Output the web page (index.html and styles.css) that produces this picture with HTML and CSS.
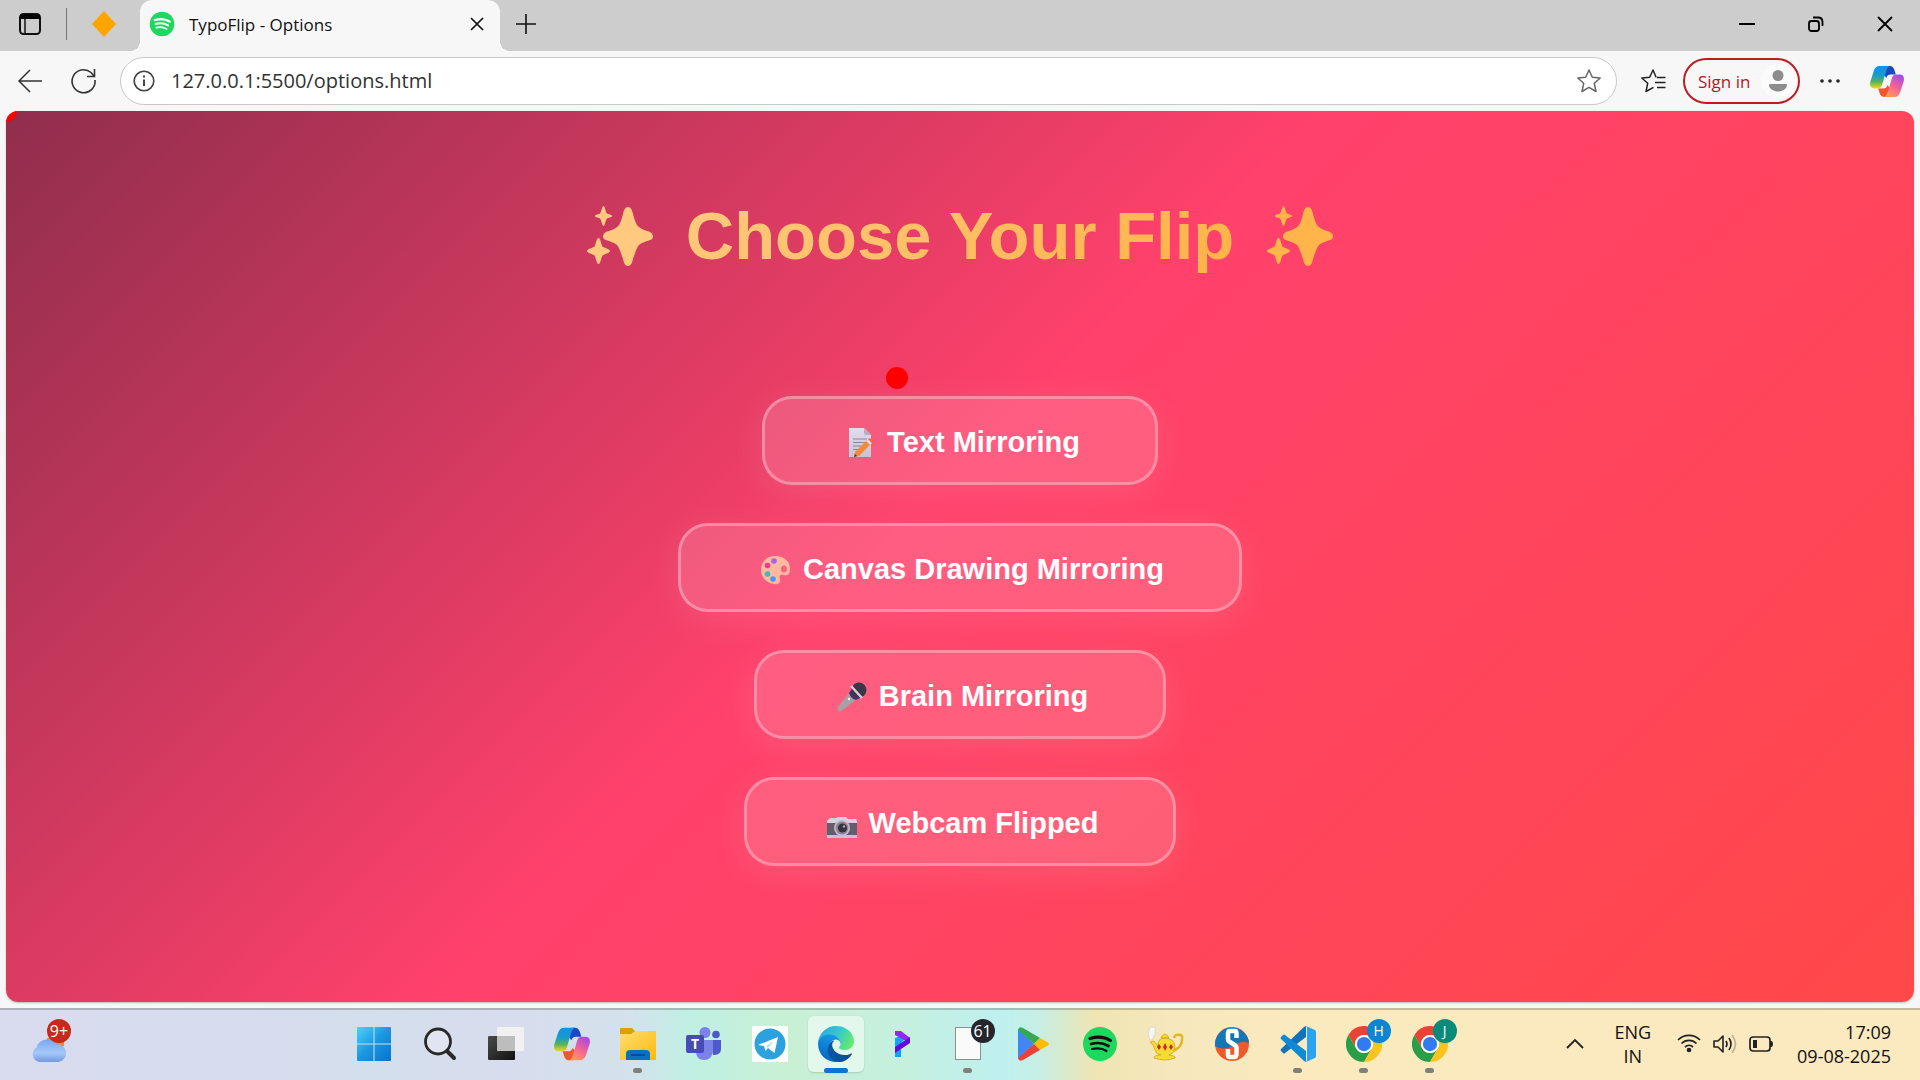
FILE: index.html
```html
<!DOCTYPE html>
<html lang="en">
<head>
<meta charset="utf-8">
<meta name="viewport" content="width=device-width, initial-scale=1">
<title>TypoFlip - Options</title>
<link rel="stylesheet" href="styles.css">
</head>
<body>
<svg class="defs" aria-hidden="true">
  <defs>
    <linearGradient id="cpA" x1="0" y1="0" x2="0" y2="1"><stop offset="0" stop-color="#178fe8"/><stop offset=".4" stop-color="#159ad0"/><stop offset=".7" stop-color="#57b35c"/><stop offset="1" stop-color="#f4d813"/></linearGradient>
    <linearGradient id="cpB" x1=".8" y1="0" x2=".3" y2="1"><stop offset="0" stop-color="#a04be8"/><stop offset=".5" stop-color="#f0609a"/><stop offset="1" stop-color="#ff9a5c"/></linearGradient>
    <linearGradient id="edA" x1="0" y1="0" x2="1" y2="0"><stop offset="0" stop-color="#0c59a4"/><stop offset="1" stop-color="#114a8b"/></linearGradient>
    <linearGradient id="edB" x1=".6" y1="0" x2=".3" y2="1"><stop offset="0" stop-color="#1b9de2"/><stop offset=".5" stop-color="#0d7fd8"/><stop offset="1" stop-color="#0667ba"/></linearGradient>
    <linearGradient id="edC" x1="0" y1=".2" x2="1" y2=".6"><stop offset="0" stop-color="#2da5e4"/><stop offset=".5" stop-color="#36c6cf"/><stop offset="1" stop-color="#66eb6e"/></linearGradient>
    <linearGradient id="winG" x1="0" y1="0" x2="1" y2="1"><stop offset="0" stop-color="#4dd2ff"/><stop offset=".5" stop-color="#1a96e0"/><stop offset="1" stop-color="#0673cf"/></linearGradient>
    <linearGradient id="foldG" x1="0" y1="0" x2="1" y2="1"><stop offset="0" stop-color="#ffdd72"/><stop offset="1" stop-color="#fdb90d"/></linearGradient>
    <linearGradient id="cloudG" x1="0" y1="0" x2="0" y2="1"><stop offset="0" stop-color="#7ba7ec"/><stop offset=".6" stop-color="#a5c8fa"/><stop offset="1" stop-color="#7399e0"/></linearGradient>
    <linearGradient id="darkG" x1="0" y1="0" x2="1" y2="1"><stop offset="0" stop-color="#4a4a48"/><stop offset="1" stop-color="#111"/></linearGradient>
    <linearGradient id="paperG" x1="0" y1="0" x2="0" y2="1"><stop offset="0" stop-color="#e3dced"/><stop offset="1" stop-color="#c9c2d6"/></linearGradient>
    <symbol id="copilot" viewBox="0 0 108 98">
      <path fill="#1b48c8" d="M52 0H63C71 0 75 5 78 14L82 27H66C58 27 55 30 52 38L40 20Z"/>
      <path fill="url(#cpA)" d="M30 0H64C57 1 54 8 51 17L38 61C35 69 32 71 24 71H14C3 71-2 64 1 50L12 16C16 5 21 0 30 0Z"/>
      <path fill="#f2562f" d="M56 98H45C37 98 33 93 30 84L26 71H42C50 71 53 68 56 60L68 78Z"/>
      <path fill="url(#cpB)" d="M78 98H44C51 97 54 90 57 81L70 37C73 29 76 27 84 27H94C105 27 110 34 107 48L96 82C92 93 87 98 78 98Z"/>
    </symbol>
    <symbol id="chrome" viewBox="0 0 48 48">
      <path fill="#ea4335" d="M24 12H44.8A24 24 0 0 0 3.2 12L13.6 30A12 12 0 0 1 24 12Z"/>
      <path fill="#2a9d48" d="M13.6 30L3.2 12A24 24 0 0 0 24 48L34.4 30A12 12 0 0 1 13.6 30Z"/>
      <path fill="#fcc31c" d="M34.4 30L24 48A24 24 0 0 0 44.8 12H24A12 12 0 0 1 34.4 30Z"/>
      <circle cx="24" cy="24" r="12" fill="#fff"/><circle cx="24" cy="24" r="9.5" fill="#2f7cf0"/>
    </symbol>
    <symbol id="spotify" viewBox="0 0 36 36">
      <circle cx="18" cy="18" r="17" fill="#1ed75f"/>
      <g fill="none" stroke="currentColor" stroke-linecap="round"><path stroke-width="3.2" d="M8 12.5C15 10.5 23 11.200 28.500 14.500"/><path stroke-width="2.700" d="M9 18C15 16.300 21.500 17 26.500 20"/><path stroke-width="2.200" d="M10 23C15 21.800 20.500 22.300 24.500 25"/></g>
    </symbol>
    <symbol id="sparkles" viewBox="0 0 66 60">
      <path d="M41 1C44 1 45 4 46 8C48 16 50 20 52 21C54 23 60 25 63 26C67 28 67 33 63 34C60 35 54 37 52 39C50 41 48 47 46 53C45 57 44 60 41 60C38 60 37 57 36 53C34 47 32 41 30 39C28 37 22 35 19 34C15 33 15 28 19 26C22 25 28 23 30 21C32 20 34 16 36 8C37 4 38 1 41 1Z"/>
      <path d="M16.500 0C18 0 18.500 6 20 7.500C21 8.500 25 8.500 25 10C25 11.500 21 11.500 20 12.500C18.500 14 18 20 16.500 20C15 20 14.500 14 13 12.500C12 11.500 8 11.500 8 10C8 8.500 12 8.500 13 7.500C14.500 6 15 0 16.500 0Z"/>
      <path d="M11.500 32C13.500 32 14 38 15.500 40.500C17 42 23 43 23 45C23 47 17 48 15.500 49.500C14 52 13.500 58 11.500 58C9.500 58 9 52 7.500 49.500C6 48 0 47 0 45C0 43 6 42 7.500 40.500C9 38 9.500 32 11.500 32Z"/>
    </symbol>
  </defs>
</svg>

<header class="tabbar">
  <button class="icon-btn tab-actions" aria-label="Tab actions"><svg width="24" height="24" viewBox="0 0 24 24"><rect x="2" y="2" width="20" height="20" rx="3.500" fill="none" stroke="#111" stroke-width="2"/><path d="M2 7V5Q2 2 5 2H19Q22 2 22 5V7Z"/><path d="M7 7V22" stroke="#111" stroke-width="1.500"/></svg></button>
  <span class="divider"></span>
  <button class="icon-btn pinned" aria-label="Pinned tab"><svg width="24" height="26" viewBox="0 0 24 26"><path fill="#ffa500" d="M12 0L24 13L12 26L0 13Z"/></svg></button>
  <div class="tab">
    <svg class="favicon" width="26" height="26"><use href="#spotify"/></svg>
    <span class="tab-title">TypoFlip - Options</span>
    <button class="icon-btn" aria-label="Close tab"><svg width="14" height="14" viewBox="0 0 14 14"><path d="M1 1L13 13M13 1L1 13" stroke="#111" stroke-width="1.700"/></svg></button>
  </div>
  <button class="icon-btn new-tab" aria-label="New tab"><svg width="22" height="22" viewBox="0 0 22 22"><path d="M11 1V21M1 11H21" stroke="#111" stroke-width="1.600"/></svg></button>
  <div class="window-controls">
    <button class="icon-btn" aria-label="Minimize"><svg width="16" height="16" viewBox="0 0 16 16"><path d="M0 8H16" stroke="#000" stroke-width="2"/></svg></button>
    <button class="icon-btn" aria-label="Restore"><svg width="16" height="16" viewBox="0 0 16 16" fill="none" stroke="#000" stroke-width="1.800"><rect x="1" y="5" width="10" height="10" rx="2.500"/><path d="M5 1.500H10Q14.500 1.500 14.500 6V10"/></svg></button>
    <button class="icon-btn" aria-label="Close"><svg width="16" height="16" viewBox="0 0 16 16"><path d="M1 1L15 15M15 1L1 15" stroke="#000" stroke-width="1.800"/></svg></button>
  </div>
</header>

<nav class="toolbar">
  <button class="icon-btn" aria-label="Back"><svg width="26" height="24" viewBox="0 0 26 24" fill="none" stroke="#333" stroke-width="1.500"><path d="M25 12H2M13 1L2 12L13 23"/></svg></button>
  <button class="icon-btn" aria-label="Refresh"><svg width="26" height="26" viewBox="0 0 26 26" fill="none" stroke="#333" stroke-width="1.600"><path d="M24 12A11.500 11.500 0 1 1 20 4.500L23 8M23.500 1V8.500H16"/></svg></button>
  <div class="address">
    <svg width="22" height="22" viewBox="0 0 22 22" fill="none" stroke="#444" stroke-width="1.600"><circle cx="11" cy="11" r="9.800"/><path stroke-width="2" d="M11 9.500V16M11 5.500V7.500"/></svg>
    <div class="url"><input class="url-input" type="text" aria-label="Address" value="127.0.0.1:5500/options.html"></div>
    <button class="icon-btn" aria-label="Add to favourites"><svg width="26" height="26" viewBox="0 0 26 26" fill="none" stroke="#666" stroke-width="1.500" stroke-linejoin="round"><path d="M13 2L16.300 9.200L24.200 10L18.300 15.300L20 23.500L13 19.400L6 23.500L7.700 15.300L1.800 10L9.700 9.200Z"/></svg></button>
  </div>
  <button class="icon-btn" aria-label="Favourites"><svg width="26" height="26" viewBox="0 0 26 26" fill="none" stroke="#222" stroke-width="1.500" stroke-linejoin="round"><path d="M16.500 9H16L13 2L9.700 9.200L1.800 10L7.700 15.300L6 23.500L13.500 19.300M17 9.500H25.500M15 14.500H25.500M17 19.500H25.500"/></svg></button>
  <button class="signin">Sign in<svg width="34" height="34" viewBox="0 0 34 34"><circle cx="17" cy="17" r="17" fill="#fbfbfb"/><circle cx="17" cy="11.500" r="5.500" fill="#8d8d8d"/><path fill="#8d8d8d" d="M9 20H25Q26 20 26 21C26 25 21 27.500 17 27.500S8 25 8 21Q8 20 9 20Z"/></svg></button>
  <button class="icon-btn menu" aria-label="Settings and more"><svg width="20" height="4" viewBox="0 0 20 4" fill="#222"><circle cx="2" cy="2" r="1.800"/><circle cx="10" cy="2" r="1.800"/><circle cx="18" cy="2" r="1.800"/></svg></button>
  <button class="icon-btn" aria-label="Copilot"><svg width="34" height="31"><use href="#copilot"/></svg></button>
</nav>

<main class="page">
  <span class="cursor-dot corner"></span>
  <h1 class="title"><svg width="66" height="60" fill="#ffca80"><use href="#sparkles"/></svg><span class="title-text">Choose Your Flip</span><svg width="66" height="60" fill="#ffb54a"><use href="#sparkles"/></svg></h1>
  <div class="options">
    <button class="option"><svg class="emoji" viewBox="0 0 38 34"><path fill="url(#paperG)" d="M9 2H24L31 9V31H9Z"/><path fill="#b5aec4" d="M24 2L31 9H26Q24 9 24 7Z"/><path stroke="#8d879b" d="M13 13H27M13 16.500H27M13 20H24M13 23.500H20"/><path fill="#f58a3a" d="M15 26L27 14L31 18L19 30L14 31Z"/><path fill="#ddd" d="M26 15L28 13L32 17L30 19Z"/><path fill="#ff5b43" d="M28 13Q30 11 33 15Q34 16 32 17Z"/><path fill="#433" d="M14 31L15 28L17 30Z"/></svg>Text Mirroring</button>
    <button class="option"><svg class="emoji" viewBox="0 0 38 34"><path fill="#ffb9a0" d="M19 3C29 3 34 9 34 16C34 22 31 23 27 22C24 21 23 23 24 26C25 30 22 32 18 31C10 30 5 24 5 17C5 9 11 3 19 3Z"/><ellipse cx="28" cy="16" rx="3" ry="3.500" fill="#f0667c"/><circle cx="18" cy="8" r="2.800" fill="#a962ea"/><circle cx="11.500" cy="12.500" r="2.800" fill="#e83e91"/><circle cx="11.500" cy="21" r="2.800" fill="#3fb9b9"/><circle cx="17" cy="26" r="2.800" fill="#4298f2"/></svg>Canvas Drawing Mirroring</button>
    <button class="option"><svg class="emoji" viewBox="0 0 38 34"><path fill="#a7a1a6" d="M17 13L24 20L9 31Q7 32 6 30Q5 29 6 27Z"/><path fill="#4c2f70" d="M17 13L21 7L30 17L24 20Q19 19 17 13Z"/><circle cx="27" cy="10" r="7.500" fill="#3c3748"/><path d="M19 6L30 18" stroke="#d3ced8" stroke-width="2.500"/><circle cx="17" cy="19" r="1.200" fill="#eee"/></svg>Brain Mirroring</button>
    <button class="option"><svg class="emoji" viewBox="0 0 38 34"><path fill="#d6d0df" d="M6 13L8 11H14L16 10H24L26 12H34L35 14V18H5V14Z"/><path fill="#635e6b" d="M5 16H35V29H5Z"/><path fill="#c6c0db" d="M5 28H35V31H5Z"/><circle cx="20" cy="21" r="8" fill="#c4bdca"/><circle cx="20" cy="21" r="6.500" fill="#8b8595"/><circle cx="20.500" cy="21" r="4.500" fill="#393141"/><circle cx="22" cy="19.500" r="1.200" fill="#aaa"/></svg>Webcam Flipped</button>
  </div>
  <span class="cursor-dot follower"></span>
</main>

<footer class="taskbar">
  <button class="weather" aria-label="Weather"><svg width="36" height="24" viewBox="0 0 36 24"><path fill="#f28a1d" d="M17 0H34V8H17Z"/><path fill="url(#cloudG)" d="M9 24A8 8 0 0 1 6.500 9.500A11 11 0 0 1 26 6A9 9 0 1 1 28 24Z"/></svg><span class="badge">9+</span></button>
  <div class="apps">
    <button class="app" aria-label="Start"><svg viewBox="0 0 36 36"><path fill="url(#winG)" d="M2 1H17.500V17.500H1V2Q1 1 2 1ZM18.500 1H34Q35 1 35 2V17.500H18.500ZM1 18.500H17.500V35H2Q1 35 1 34ZM18.500 18.500H35V34Q35 35 34 35H18.500Z"/></svg></button>
    <button class="app" aria-label="Search"><svg viewBox="0 0 36 36" fill="none" stroke="#292927"><circle cx="16" cy="15.500" r="12.500" fill="#e1e4f1" stroke-width="2.800"/><path stroke-width="4" stroke-linecap="round" d="M25.500 25.500L32 32"/></svg></button>
    <button class="app" aria-label="Task view"><svg viewBox="0 0 36 36"><rect y="10" width="27" height="24" rx="1" fill="url(#darkG)"/><rect x="9" y="1" width="27" height="24" rx="1" fill="#f1f1f1"/><path fill="#bdbdbd" d="M9 10H27V25H9Z"/></svg></button>
    <button class="app" aria-label="Copilot"><svg><use href="#copilot"/></svg></button>
    <button class="app running" aria-label="File Explorer"><svg viewBox="0 0 36 36"><path fill="#dda006" d="M0 3Q0 2 1 2H12L15 5V12H0Z"/><path fill="url(#foldG)" d="M0 8H11L15 5H36V34H0Z"/><path fill="#0d6fc0" d="M6 34V28Q6 24 10 24H26Q30 24 30 28V34Z"/><path d="M11 29H25" stroke="#074b88" stroke-width="2"/></svg></button>
    <button class="app" aria-label="Teams"><svg viewBox="0 0 36 36"><circle cx="19" cy="6.500" r="5.500" fill="#7b83eb"/><circle cx="30" cy="8.500" r="3.800" fill="#5059c9"/><path fill="#5059c9" d="M25 14H35V23Q35 29 27 29Z"/><path fill="#7b83eb" d="M10 14H27V25Q26 34 18 34T10 25Z"/><rect y="9" width="18" height="18" rx="2" fill="#474bb5"/><text x="9" y="23" class="glyph" font-size="14">T</text></svg></button>
    <button class="app" aria-label="Telegram"><svg viewBox="0 0 36 36"><path fill="#fff" d="M0 0H36V36H0Z"/><circle cx="18" cy="18" r="15.500" fill="#2ba1de"/><path fill="#fff" d="M6 19L26 11L22.500 27L16 22L13.500 25L12 20Z"/><path d="M14 20L22 15L16 22Z" fill="#b7dff2"/></svg></button>
    <button class="app active" aria-label="Edge"><svg viewBox="0 0 256 256"><path fill="url(#edA)" d="M235.700 195.500a93.700 93.700 0 0 1-10.600 4.700 101.900 101.900 0 0 1-35.900 6.400c-47.300 0-88.500-32.500-88.500-74.300a31.500 31.500 0 0 1 16.400-27.300c-42.800 1.800-53.800 46.400-53.800 72.500 0 74 68.100 81.400 82.800 81.400 7.900 0 19.800-2.300 27-4.600l1.300-.4a128.300 128.300 0 0 0 66.600-52.800 4 4 0 0 0-5.300-5.600Z"/><path fill="url(#edB)" d="M105.700 241.400a79.200 79.200 0 0 1-22.700-21.300 80.700 80.700 0 0 1 29.500-120c3.200-1.500 8.500-4.100 15.600-4a32.400 32.400 0 0 1 25.700 13 31.900 31.900 0 0 1 6.300 18.700c0-.2 24.500-79.600-80-79.600-43.900 0-80 41.600-80 78.200a130.200 130.200 0 0 0 12.100 56 128 128 0 0 0 156.400 67 75.500 75.500 0 0 1-62.800-8Z"/><path fill="url(#edC)" d="M152.300 148.900c-.9 1-3.400 2.500-3.400 5.600 0 2.600 1.700 5.200 4.800 7.300 14.300 10 41.400 8.600 41.500 8.600a59.600 59.600 0 0 0 30.300-8.300 61.400 61.400 0 0 0 30.400-52.900c.3-22.400-8-37.300-11.300-43.900C223.500 23.900 177.700 0 128 0A128 128 0 0 0 0 126.200c.5-36.500 36.800-66 80-66 3.500 0 23.500.3 42 10a72.600 72.600 0 0 1 30.900 29.300c6.100 10.600 7.200 24.100 7.200 29.500s-2.700 13.300-7.800 19.900Z"/></svg></button>
    <button class="app" aria-label="Media app"><svg viewBox="0 0 36 36"><path fill="#14a0ff" d="M11 12L17 10L21 13L17 17V31H11Z"/><path fill="#8f28f0" d="M11 5H17L26 12V17L11 9Z"/><path fill="#6707dc" d="M26 11V17L11 27V21Z"/></svg></button>
    <button class="app running" aria-label="Notifications app"><svg viewBox="0 0 36 36"><rect x="5.500" y="1.500" width="25" height="32" fill="#fafafa" stroke="#8a9291"/></svg><span class="badge dark">61</span></button>
    <button class="app" aria-label="Google Play"><svg viewBox="0 0 36 36"><path fill="#4285f4" d="M2 3L18 18L2 33Z"/><path fill="#34a853" d="M2 4Q3 0 7 2L24 12L18 18Z"/><path fill="#fbbc04" d="M24 12L32 16.500Q34 18 32 19.500L24 24L18 18Z"/><path fill="#ea4335" d="M2 32L18 18L24 24L7 34Q3 36 2 32Z"/></svg></button>
    <button class="app" aria-label="Spotify"><svg><use href="#spotify"/></svg></button>
    <button class="app" aria-label="Teapot"><svg viewBox="0 0 36 36"><path fill="#f5f5f3" stroke="#c9c5b4" stroke-width=".5" d="M2 14Q-1 9 1 5Q1 0 5 1Q9 1 7 5Q8 8 6 10L4 14Z"/><path fill="none" stroke="#dfb91d" stroke-width="2.500" d="M26 12Q27 8 31 9Q35 8 34 14Q34 21 25 25"/><path fill="#f7dc30" stroke="#c79d15" stroke-width=".7" d="M2 16L6 15L10 20Q9 13 16 12Q26 12 27 20Q27 27 21 29Q28 30 27 32Q17 36 6 32Q6 29 13 29Q8 28 7 24Q6 19 2 16ZM13 12Q14 9 17 8Q20 9 21 12Z"/><path fill="#cf2436" d="M11 18L13 21L11 24L9 21ZM17 17L19 21L17 25L15 21ZM23 18L25 21L23 24L21 21Z"/></svg></button>
    <button class="app" aria-label="S app"><svg viewBox="0 0 36 36"><circle cx="18" cy="18" r="17" fill="#f05a28"/><path fill="#1476b8" d="M1 20A17 17 0 1 1 35 17Q27 14 19 20Q9 25 1 20Z"/><path fill="none" stroke="#fff" stroke-width="4.500" d="M22.500 12V7Q22.500 5 20.500 5H16Q14 5 14 7V13Q14 15 16 16L20 18.500Q22.500 20 22.500 22V28Q22.500 31 20 31H16Q14 31 14 29V23"/></svg></button>
    <button class="app running" aria-label="Visual Studio Code"><svg viewBox="0 0 36 36"><path fill="#0f73bd" d="M26 0V11L5 27Q4 28 3 27L1 25Q0 24 1 23L24 1Z"/><path fill="#108ad4" d="M26 36V25L5 9Q4 8 3 9L1 11Q0 12 1 13L24 35Z"/><path fill="#2aa3f0" d="M26 0L35 4Q36 5 36 6V30Q36 31 35 32L26 36Q27 35 27 34V2Q27 1 26 0Z"/></svg></button>
    <button class="app running" aria-label="Chrome, profile H"><svg><use href="#chrome"/></svg><span class="badge blue">H</span></button>
    <button class="app running" aria-label="Chrome, profile J"><svg><use href="#chrome"/></svg><span class="badge green">J</span></button>
  </div>
  <div class="tray">
    <button class="icon-btn" aria-label="Hidden icons"><svg width="18" height="10" viewBox="0 0 18 10"><path d="M1 9L9 1L17 9" fill="none" stroke="#222" stroke-width="1.800"/></svg></button>
    <button class="tray-text lang">ENG<br>IN</button>
    <button class="icon-btn status" aria-label="Network, volume and battery">
      <svg width="24" height="24" viewBox="0 0 24 24" fill="none" stroke="#222" stroke-width="1.700"><path d="M1 8A15.500 15.500 0 0 1 23 8M4.500 11.500A10.500 10.500 0 0 1 19.500 11.500M8 15A6 6 0 0 1 16 15"/><circle cx="12" cy="18" r="1.500" fill="#222"/></svg>
      <svg width="24" height="24" viewBox="0 0 24 24" fill="none" stroke="#222" stroke-width="1.600" stroke-linejoin="round"><path d="M1 9H5L10 4V20L5 15H1ZM13 9Q15 12 13 15M16 6Q20 12 16 18"/><path stroke="#bcb298" d="M19 3Q26 12 19 21"/></svg>
      <svg width="24" height="24" viewBox="0 0 24 24" fill="none" stroke="#222" stroke-width="1.700"><rect x="1" y="5" width="20" height="14" rx="3"/><path fill="#222" stroke="none" d="M4 8H8V16H4ZM21 9H22Q24 9 24 12T22 15H21Z"/></svg>
    </button>
    <button class="tray-text clock">17:09<br>09-08-2025</button>
  </div>
</footer>
</body>
</html>
```

FILE: styles.css
```css
* { box-sizing: border-box; }
body {
  margin: 0;
  min-height: 100vh;
  display: flex;
  flex-direction: column;
  background: #f7f7f7;
  font-family: "Open Sans", "Noto Sans", sans-serif;
  color: #111;
}
svg { display: block; flex: none; }
button { font: inherit; color: inherit; border: 0; padding: 0; background: none; }
.defs { position: absolute; width: 0; height: 0; }
.icon-btn { display: flex; align-items: center; justify-content: center; flex: none; }

/* Tab strip */
.tabbar { display: flex; align-items: center; height: 51px; padding: 0 27px 3px 18px; background: #cdcdcd; }
.divider { width: 1px; height: 32px; margin: 0 25px 0 24px; background: #777; }
.tab {
  position: relative;
  display: flex;
  align-items: center;
  gap: 14px;
  width: 360px;
  height: 51px;
  margin: 3px 0 0 24px;
  padding: 0 16px 3px 9px;
  border-radius: 12px 12px 0 0;
  background: #f7f7f7;
}
.tab::before, .tab::after { content: ""; position: absolute; bottom: 0; width: 10px; height: 10px; }
.tab::before { left: -10px; background: radial-gradient(circle at 0 0, transparent 10px, #f7f7f7 10px); }
.tab::after { right: -10px; background: radial-gradient(circle at 100% 0, transparent 10px, #f7f7f7 10px); }
.favicon { color: #fff; }
.tab-title { flex: 1; font-size: 17px; }
.new-tab { margin-left: 15px; }
.window-controls { display: flex; gap: 53px; margin-left: auto; }

/* Toolbar */
.toolbar { display: flex; align-items: center; height: 60px; padding: 0 16px 0 17px; }
.toolbar > .icon-btn:nth-child(2) { margin-left: 28px; }
.address {
  display: flex;
  align-items: center;
  flex: 1;
  height: 48px;
  margin: 0 23px;
  padding: 0 14px 0 12px;
  border: 1px solid #c9c9c9;
  border-radius: 24px;
  background: #fff;
}
.url { flex: 1; margin-left: 16px; }
.url-input {
  width: 100%;
  border: 0;
  padding: 0;
  outline: 0;
  background: none;
  font: 20px/28px "Open Sans", "Noto Sans", sans-serif;
  color: #333;
}
.signin {
  display: flex;
  align-items: center;
  justify-content: space-between;
  width: 117px;
  height: 46px;
  margin: 0 20px 0 17px;
  padding: 0 3px 0 13px;
  border: 2px solid #bc1d21;
  border-radius: 23px;
  font-size: 17px;
  color: #b3191d;
}
.menu { margin-right: 30px; }

/* Options page */
.page {
  position: relative;
  display: flex;
  flex-direction: column;
  align-items: center;
  flex: 1;
  margin: 0 6px 6px;
  padding: 86px 24px 48px;
  overflow: hidden;
  border-radius: 12px;
  background: linear-gradient(135deg, #902e4d 0%, #ff416c 47%, #ff4848 100%);
  box-shadow: 0 1px 2px #bbb;
  font-family: "Liberation Sans", Arial, sans-serif;
}
.title {
  display: flex;
  align-items: center;
  gap: 33px;
  margin: 0 0 122px;
  font-size: 67px;
  line-height: 77px;
}
.title-text {
  background: linear-gradient(135deg, #ffc97d, #ffb347);
  -webkit-background-clip: text;
  background-clip: text;
  color: transparent;
}
.options { display: flex; flex-direction: column; align-items: center; gap: 38px; }
.option {
  display: flex;
  align-items: center;
  gap: 9px;
  height: 89px;
  padding: 4px 75px 0;
  border: 3px solid rgba(255, 255, 255, .3);
  border-radius: 30px;
  background: rgba(255, 255, 255, .15);
  box-shadow: 0 8px 36px rgba(255, 255, 255, .1);
  font-size: 29px;
  font-weight: 700;
  color: #fff;
}
.emoji { width: 38px; height: 34px; }
.cursor-dot { position: absolute; width: 22px; height: 22px; border-radius: 50%; background: red; }
.corner { left: -11px; top: -11px; }
.follower { left: 880px; top: 256px; }

/* Taskbar */
.taskbar {
  display: grid;
  grid-template-columns: 18% auto 1fr;
  align-items: center;
  height: 72px;
  padding-bottom: 2px;
  border-top: 2px solid rgba(60, 60, 60, .28);
  background: linear-gradient(90deg, #d8dcee 0%, #d7dcee 13%, #d3dfec 20%, #d8dcee 26%, #d3e2ec 33%, #c0f0e4 36%, #c8f0d4 41%, #c5f0de 47%, #bff0ef 52%, #c5efe6 54%, #efe5b2 57%, #f6e7bc 61%, #fceabf 68%, #fbe9bf 100%) border-box;
}
.weather { position: relative; display: flex; justify-self: start; margin-left: 30px; padding: 18px 0 6px; }
.badge {
  position: absolute;
  left: 17px;
  top: -1px;
  min-width: 24px;
  height: 24px;
  border-radius: 12px;
  background: #c42b1c;
  font-size: 16px;
  line-height: 24px;
  text-align: center;
  color: #fff;
}
.badge.dark, .badge.blue, .badge.green { left: 31px; top: 3px; }
.badge.dark { background: #25252d; }
.badge.blue { background: #0b86d3; font-size: 14px; }
.badge.green { background: #0a8a78; font-size: 14px; }
.apps { display: flex; gap: 10px; }
.app {
  position: relative;
  display: flex;
  align-items: center;
  justify-content: center;
  width: 56px;
  height: 56px;
  border-radius: 6px;
}
.app svg { width: 36px; height: 36px; }
.running::after, .active::after {
  content: "";
  position: absolute;
  bottom: -1px;
  width: 9px;
  height: 5px;
  border-radius: 3px;
  background: #7f8079;
}
.active { background: rgba(255, 255, 255, .5); box-shadow: 0 1px 2px rgba(0, 0, 0, .15); }
.active::after { width: 24px; background: #0a76d0; }
.glyph { fill: #fff; font-family: "Open Sans", sans-serif; font-weight: 700; text-anchor: middle; }
.tray { display: flex; align-items: center; justify-content: flex-end; padding-right: 29px; }
.tray-text { font-size: 18px; line-height: 24px; }
.lang { margin: 0 26px 0 30px; text-align: center; }
.status { gap: 12px; }
.clock { margin-left: 24px; text-align: right; }
```
